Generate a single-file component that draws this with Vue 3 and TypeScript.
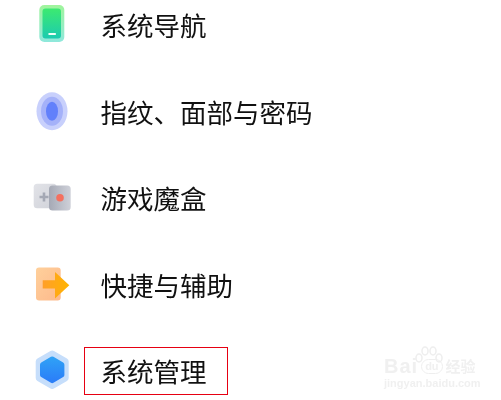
<script setup lang="ts">
const rows = [
  { id: 'nav', label: '系统导航' },
  { id: 'finger', label: '指纹、面部与密码' },
  { id: 'game', label: '游戏魔盒' },
  { id: 'assist', label: '快捷与辅助' },
  { id: 'system', label: '系统管理', boxed: true },
]
</script>

<template>
  <div class="page">
    <ul class="list">
      <li v-for="r in rows" :key="r.id" class="row">
        <div class="icon">
          <svg v-if="r.id === 'nav'" width="44" height="44" viewBox="0 0 44 44">
            <defs>
              <linearGradient id="g1" x1="0" y1="0" x2="0" y2="1">
                <stop offset="0" stop-color="#a0f49c" />
                <stop offset="1" stop-color="#8fe8dc" />
              </linearGradient>
              <linearGradient id="g2" x1="0" y1="0" x2="0" y2="1">
                <stop offset="0" stop-color="#3cea70" />
                <stop offset="1" stop-color="#1ccbb0" />
              </linearGradient>
            </defs>
            <rect x="9.300" y="2" width="25" height="37" rx="5" fill="url(#g1)" />
            <rect x="12.500" y="5.500" width="18.500" height="30" rx="3" fill="url(#g2)" />
            <rect x="18.300" y="30" width="7.700" height="2" rx="0.800" fill="#f0fff8" />
          </svg>
          <svg v-else-if="r.id === 'finger'" width="44" height="44" viewBox="0 0 44 44">
            <ellipse cx="22" cy="21.250" rx="15.500" ry="19" fill="#c8d0fc" />
            <ellipse cx="22" cy="21.250" rx="11" ry="14.500" fill="#a4b1f9" />
            <ellipse cx="22" cy="21.250" rx="6" ry="9.500" fill="#6280fb" />
          </svg>
          <svg v-else-if="r.id === 'game'" width="44" height="44" viewBox="0 0 44 44">
            <defs>
              <linearGradient id="g3" x1="0" y1="0" x2="1" y2="1">
                <stop offset="0" stop-color="#e2e3e8" />
                <stop offset="1" stop-color="#d0d2d9" />
              </linearGradient>
              <linearGradient id="g4" x1="0" y1="0" x2="1" y2="0">
                <stop offset="0" stop-color="#a5a9b5" />
                <stop offset="1" stop-color="#cfd1d9" />
              </linearGradient>
            </defs>
            <rect x="3.700" y="7.750" width="23" height="24.500" rx="3.500" fill="url(#g3)" />
            <path d="M12.700 16.500h2.600v3.200h3.200v2.600h-3.200v3.200h-2.600v-3.200h-3.200v-2.600h3.200z" fill="#a4a8b4" />
            <rect x="19" y="9.500" width="21.700" height="25" rx="3.500" fill="url(#g4)" />
            <circle cx="30" cy="21.750" r="3.800" fill="#f4705f" />
          </svg>
          <svg v-else-if="r.id === 'assist'" width="44" height="44" viewBox="0 0 44 44">
            <defs>
              <linearGradient id="g5" x1="0" y1="0" x2="1" y2="1">
                <stop offset="0" stop-color="#ffd09b" />
                <stop offset="1" stop-color="#fdb98c" />
              </linearGradient>
              <linearGradient id="g6" x1="0" y1="0" x2="1" y2="0">
                <stop offset="0" stop-color="#ff9f2a" />
                <stop offset="1" stop-color="#ffb400" />
              </linearGradient>
            </defs>
            <rect x="6" y="4.500" width="24.700" height="33" rx="3" fill="url(#g5)" />
            <path d="M12.700 17.300h12.300v-8.300l14.300 13.300-14.300 13.300v-10h-12.300z" fill="url(#g6)" />
          </svg>
          <svg v-else width="44" height="44" viewBox="0 0 44 44">
            <defs>
              <linearGradient id="g7" x1="0" y1="0" x2="0" y2="1">
                <stop offset="0" stop-color="#2f9ff6" />
                <stop offset="1" stop-color="#2b7ff8" />
              </linearGradient>
            </defs>
            <path d="M22.200 5l13 7.500v16.500l-13 7.500-13-7.500v-16.500z" fill="#c6defb" stroke="#c6defb" stroke-width="7" stroke-linejoin="round" />
            <path d="M22.200 10l9.700 5.700v10.200l-9.700 5.700-9.700-5.700v-10.200z" fill="url(#g7)" stroke="url(#g7)" stroke-width="5" stroke-linejoin="round" />
          </svg>
        </div>
        <span class="label" :class="{ boxed: r.boxed }"><span class="txt">{{ r.label }}</span></span>
      </li>
    </ul>

    <div class="mark">
      <svg class="paw" width="30" height="32" viewBox="0 0 30 32">
        <g fill="none" stroke="#eeeeee" stroke-width="1.500">
          <ellipse cx="6" cy="12" rx="3" ry="4" />
          <ellipse cx="12" cy="5" rx="3" ry="4" />
          <ellipse cx="20" cy="5" rx="3" ry="4" />
          <ellipse cx="26" cy="12" rx="3" ry="4" />
        </g>
      </svg>
      <div class="mark-top">
        <span class="bai">Bai</span>
        <span class="du">du</span>
        <span class="jy">经验</span>
      </div>
      <div class="mark-url">jingyan.baidu.com</div>
    </div>
  </div>
</template>

<style>
html, body { background: #fff; }
</style>

<style scoped>
.page {
  position: relative;
  width: 501px;
  height: 400px;
  overflow: hidden;
  background: #fff;
  font-family: "Noto Sans CJK SC", "Noto Sans", sans-serif;
}
.list {
  list-style: none;
  margin: -18px 0 0;
  padding: 0;
}
.row {
  display: flex;
  align-items: center;
  height: 86.500px;
  padding-left: 30px;
}
.icon {
  width: 44px;
  height: 44px;
  flex: none;
  filter: blur(0.5px);
}
.icon svg { display: block; }
.label {
  margin-left: 27px;
  display: block;
  color: #111;
}
.txt {
  display: block;
  font-size: 26.500px;
  line-height: 36px;
  margin-left: -0.500px;
  white-space: nowrap;
  filter: blur(0.35px);
}
.boxed {
  margin-left: 10px;
  padding: 5px 16px;
  width: 144px;
  height: 48px;
  box-sizing: border-box;
  border: 1px solid #e60012;
}
.mark {
  position: absolute;
  left: 384px;
  top: 346px;
  width: 100px;
  height: 50px;
  color: #f0f0f0;
  pointer-events: none;
  filter: blur(0.5px);
}
.paw {
  position: absolute;
  left: 29px;
  top: 0;
}
.mark-top {
  position: absolute;
  left: 0;
  top: 10px;
  height: 20px;
  display: flex;
  align-items: center;
  white-space: nowrap;
}
.bai {
  font: 700 20px/20px "Liberation Sans", sans-serif;
  letter-spacing: 1px;
}
.du {
  margin-left: 3px;
  font: 700 11px/13px "Liberation Sans", sans-serif;
  padding: 0 3px;
  border: 1.500px solid #eeeeee;
  border-radius: 8px;
}
.jy {
  margin-left: 3px;
  font-size: 15px;
  line-height: 20px;
  font-weight: 700;
}
.mark-url {
  position: absolute;
  left: 0;
  top: 31px;
  font: 700 11px/13px "Liberation Sans", sans-serif;
  white-space: nowrap;
}
</style>
